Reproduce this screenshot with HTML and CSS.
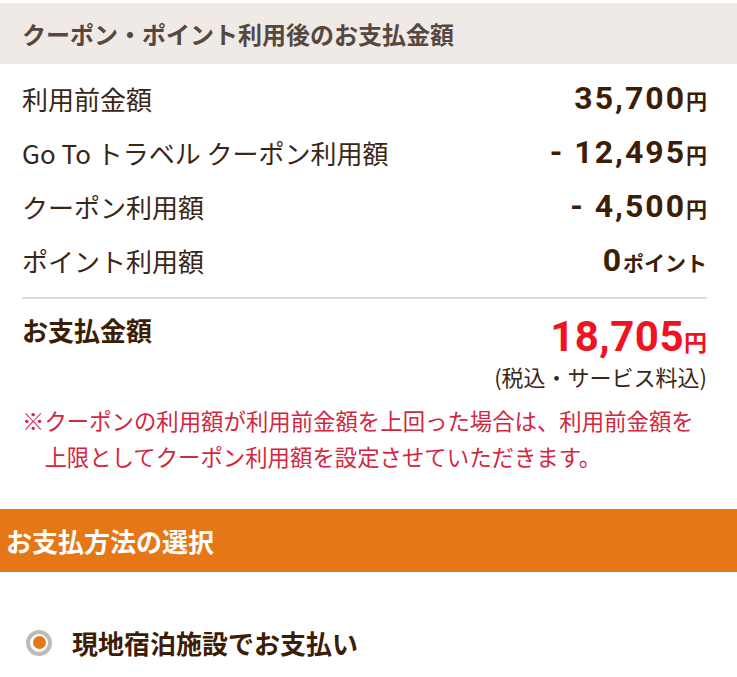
FILE: index.html
```html
<!DOCTYPE html>
<html lang="ja">
<head>
  <meta charset="UTF-8">
  <meta name="viewport" content="width=device-width, initial-scale=1.0">
  <title>お支払金額</title>
  <link rel="stylesheet" href="styles.css">
</head>
<body>
<section class="summary">
  <h2 class="summary-head">クーポン・ポイント利用後のお支払金額</h2>
  <div class="summary-body">
    <ul class="rows">
      <li class="row">
        <span class="label">利用前金額</span>
        <span class="value">35,700<span class="unit">円</span></span>
      </li>
      <li class="row">
        <span class="label">Go To トラベル クーポン利用額</span>
        <span class="value">- 12,495<span class="unit">円</span></span>
      </li>
      <li class="row">
        <span class="label">クーポン利用額</span>
        <span class="value">- 4,500<span class="unit">円</span></span>
      </li>
      <li class="row">
        <span class="label">ポイント利用額</span>
        <span class="value">0<span class="unit">ポイント</span></span>
      </li>
    </ul>

    <div class="total">
      <span class="total-label">お支払金額</span>
      <div class="total-right">
        <span class="total-value">18,705<span class="unit">円</span></span>
        <span class="tax">(税込・サービス料込)</span>
      </div>
    </div>

    <p class="note">※クーポンの利用額が利用前金額を上回った場合は、利用前金額を上限としてクーポン利用額を設定させていただきます。</p>
  </div>
</section>

<section class="payment">
  <h2 class="payment-head">お支払方法の選択</h2>
  <label class="option">
    <span class="radio"></span>
    <span class="option-label">現地宿泊施設でお支払い</span>
  </label>
</section>
</body>
</html>
```

FILE: styles.css
```css
body {
  margin: 0;
  background: #fff;
  color: #3a2616;
  font-family: "Noto Sans CJK JP", sans-serif;
}
h2 {
  margin: 0;
}
.summary {
  padding-top: 3px;
}
.summary-head {
  height: 61px;
  display: flex;
  align-items: center;
  padding-left: 22px;
  background: #efeae6;
  color: #574741;
  font-size: 24px;
  font-weight: bold;
}
.summary-body {
  padding: 0 30px 0 22px;
}
.rows {
  list-style: none;
  margin: 0;
  padding: 7px 0 0;
}
.row {
  height: 54px;
  display: flex;
  justify-content: space-between;
  align-items: center;
}
.label {
  font-size: 26px;
  font-weight: normal;
  color: #3a2616;
}
.value {
  font-family: Roboto, "Noto Sans CJK JP", sans-serif;
  font-size: 32px;
  font-weight: bold;
  letter-spacing: 2px;
  color: #3d1d06;
}
.unit {
  font-family: "Noto Sans CJK JP", sans-serif;
  font-size: 21px;
  letter-spacing: 0;
}
.total {
  margin-top: 10px;
  border-top: 2px solid #e0dbd7;
  display: flex;
  justify-content: space-between;
  align-items: flex-start;
  padding-top: 16px;
}
.total-label {
  font-size: 26px;
  font-weight: bold;
  line-height: 30px;
  color: #3d1d06;
}
.total-right {
  display: flex;
  flex-direction: column;
  align-items: flex-end;
}
.total-value {
  font-family: Roboto, "Noto Sans CJK JP", sans-serif;
  font-size: 42px;
  font-weight: bold;
  line-height: 44px;
  letter-spacing: 0.5px;
  color: #f0121f;
}
.total-value .unit {
  font-size: 23px;
}
.tax {
  font-size: 22px;
  font-weight: normal;
  line-height: 26px;
  color: #3a2616;
}
.note {
  margin: 13px 0 0;
  padding-left: 1em;
  text-indent: -1em;
  font-size: 22.4px;
  line-height: 36px;
  color: #d3263f;
}
.payment {
  margin-top: 35px;
}
.payment-head {
  height: 63px;
  display: flex;
  align-items: center;
  padding-left: 6px;
  background: #e67716;
  color: #fff;
  font-size: 26px;
  font-weight: bold;
}
.option {
  display: flex;
  align-items: center;
  gap: 20px;
  margin: 52px 0 0 26px;
}
.radio {
  width: 26px;
  height: 26px;
  border: 4px solid #bfbab7;
  border-radius: 50%;
  box-sizing: border-box;
  display: flex;
  align-items: center;
  justify-content: center;
}
.radio::after {
  content: "";
  width: 13px;
  height: 13px;
  border-radius: 50%;
  background: #e67716;
}
.option-label {
  font-size: 26px;
  font-weight: bold;
  color: #3d1d06;
}
```
